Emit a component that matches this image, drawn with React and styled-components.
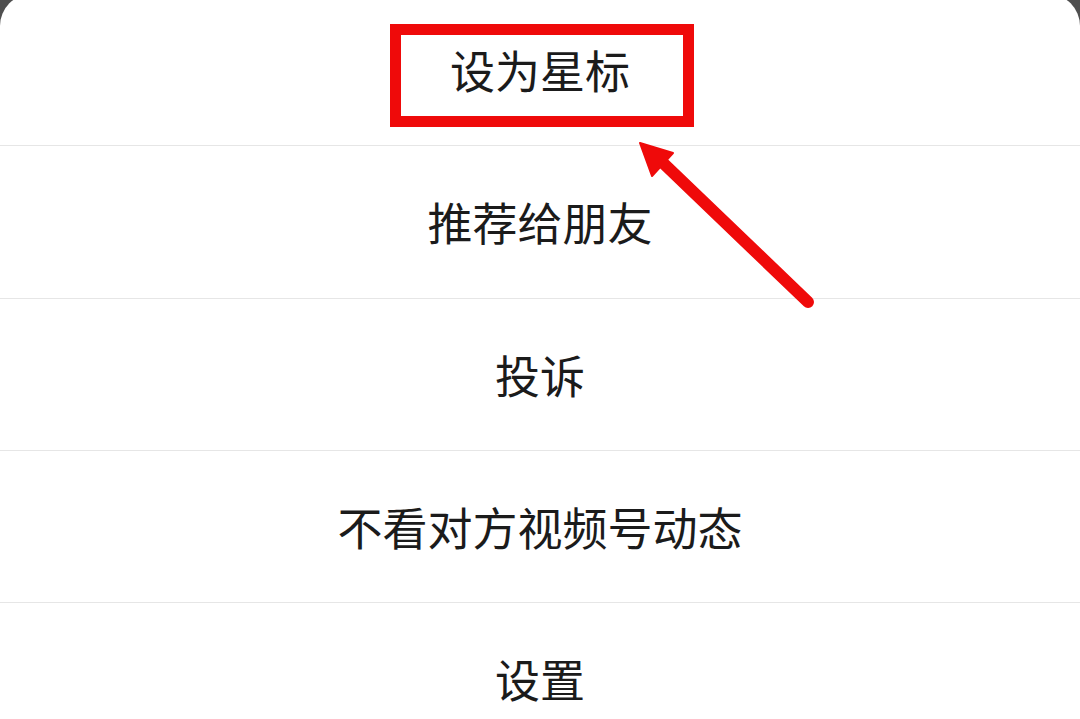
import React from "react";
import styled, { createGlobalStyle } from "styled-components";

const Global = createGlobalStyle`
  html, body { margin: 0; padding: 0; background: #4f4f4f; overflow: hidden; }
  #root { width: 1080px; height: 719px; }
`;

const Screen = styled.div`
  position: relative;
  width: 1080px;
  height: 719px;
  overflow: hidden;
  background: #4f4f4f;
`;

const Sheet = styled.div`
  margin-top: -6px;
  background: #ffffff;
  border-radius: 32px 32px 0 0;
  display: flex;
  flex-direction: column;
  height: 760px;
`;

const Item = styled.div`
  height: 151.33px;
  flex: none;
  display: flex;
  align-items: center;
  justify-content: center;
  border-bottom: 1px solid ${(p) => (p.$last ? "transparent" : "#e6e6e6")};
  font-family: "Noto Sans CJK SC", "Noto Sans", sans-serif;
  font-size: 45px;
  color: #1b1b1b;
  letter-spacing: 0;
`;

const Highlight = styled.div`
  position: absolute;
  left: 390px;
  top: 24px;
  width: 304px;
  height: 103px;
  box-sizing: border-box;
  border: 11px solid #ef0a0a;
  pointer-events: none;
`;

const Arrow = styled.svg`
  position: absolute;
  left: 0;
  top: 0;
  pointer-events: none;
`;

const items = ["设为星标", "推荐给朋友", "投诉", "不看对方视频号动态", "设置"];

export default function App() {
  return (
    <>
      <Global />
      <Screen>
        <Sheet>
          {items.map((t, i) => (
            <Item key={t} $last={i === items.length - 1}>
              {t}
            </Item>
          ))}
        </Sheet>
        <Highlight />
        <Arrow width="1080" height="719" viewBox="0 0 1080 719">
          <line
            x1="808"
            y1="302"
            x2="660"
            y2="160"
            stroke="#ef0a0a"
            strokeWidth="12"
            strokeLinecap="round"
          />
          <polygon points="640,143 673,153 652,176" fill="#ef0a0a" stroke="#ef0a0a" strokeWidth="2" strokeLinejoin="round" />
        </Arrow>
      </Screen>
    </>
  );
}
